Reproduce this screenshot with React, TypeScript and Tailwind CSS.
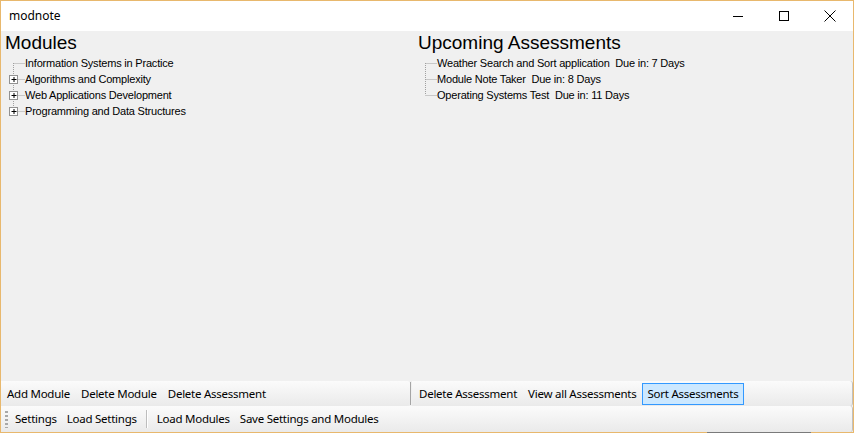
import React from "react";

const modules = [
  { name: "Information Systems in Practice", children: false },
  { name: "Algorithms and Complexity", children: true },
  { name: "Web Applications Development", children: true },
  { name: "Programming and Data Structures", children: true },
];

const assessments = [
  "Weather Search and Sort application  Due in: 7 Days",
  "Module Note Taker  Due in: 8 Days",
  "Operating Systems Test  Due in: 11 Days",
];

// tree connector for one row (16px high)
const TreeLines = ({
  x,
  width,
  first,
  last,
  plus,
}: {
  x: number;
  width: number;
  first: boolean;
  last: boolean;
  plus: boolean;
}) => (
  <svg width={width} height={16} className="shrink-0 block">
    <line
      x1={x}
      x2={x}
      y1={first ? 8 : 0}
      y2={last ? 8 : 16}
      stroke="#a0a0a0"
      strokeDasharray="1 1"
    />
    <line
      x1={plus ? x + 4 : x}
      x2={width}
      y1={8.5}
      y2={8.5}
      stroke="#a0a0a0"
      strokeDasharray="1 1"
    />
    {plus && (
      <g>
        <rect x={x - 4} y={4.5} width={8} height={8} fill="#fff" stroke="#919191" />
        <line x1={x - 2} x2={x + 3} y1={8.5} y2={8.5} stroke="#000" />
        <line x1={x + 0.5} x2={x + 0.5} y1={6} y2={11} stroke="#000" />
      </g>
    )}
  </svg>
);

const StripItem = ({ label, active }: { label: string; active?: boolean }) => (
  <div
    className={
      active
        ? "h-[22px] px-[4px] flex items-center border border-[#3399ff] bg-[#cce8ff]"
        : "h-[22px] px-[5px] flex items-center"
    }
  >
    {label}
  </div>
);

const App = () => {
  return (
    <div
      className="w-[854px] h-[433px] flex flex-col bg-[#f0f0f0] border-x border-t border-[#e8b86d] text-black overflow-hidden"
      style={{ fontFamily: "'Liberation Sans', Arial, sans-serif" }}
    >
      {/* Title bar */}
      <div className="h-[30px] bg-white flex items-center shrink-0">
        <div className="pl-2 text-[12px] font-['Noto_Sans',sans-serif] flex-1">
          modnote
        </div>
        <div className="flex h-full">
          <div className="w-[46px] h-full flex items-center justify-center">
            <div className="w-[10px] h-px bg-black" />
          </div>
          <div className="w-[46px] h-full flex items-center justify-center">
            <div className="w-[10px] h-[10px] border border-black" />
          </div>
          <div className="w-[46px] h-full flex items-center justify-center">
            <svg width="12" height="12" viewBox="0 0 12 12">
              <path d="M0.5 0.5 L11.5 11.5 M11.5 0.5 L0.5 11.5" stroke="#000" strokeWidth="1" />
            </svg>
          </div>
        </div>
      </div>

      {/* Main panels */}
      <div className="flex-1 flex">
        <div className="w-[412px] pl-1 pt-px">
          <h1 className="text-[19px] leading-[22px]">Modules</h1>
          <div className="pt-px text-[11px] leading-4 tracking-[-0.2px]">
            {modules.map((m, i) => (
              <div key={m.name} className="flex items-center h-4">
                <TreeLines
                  x={8.5}
                  width={20}
                  first={i === 0}
                  last={i === modules.length - 1}
                  plus={m.children}
                />
                <span className="whitespace-pre">{m.name}</span>
              </div>
            ))}
          </div>
        </div>
        <div className="flex-1 pl-[5px] pt-px">
          <h1 className="text-[19px] leading-[22px]">Upcoming Assessments</h1>
          <div className="pt-px text-[11px] leading-4 tracking-[-0.2px]">
            {assessments.map((a, i) => (
              <div key={a} className="flex items-center h-4">
                <TreeLines
                  x={7.5}
                  width={19}
                  first={i === 0}
                  last={i === assessments.length - 1}
                  plus={false}
                />
                <span className="whitespace-pre">{a}</span>
              </div>
            ))}
          </div>
        </div>
      </div>

      {/* Tool strips */}
      <div className="h-[25px] flex shrink-0 text-[11.5px] tracking-[-0.25px] font-['Noto_Sans',sans-serif]">
        <div className="w-[409px] flex items-center gap-px pl-[1px] rounded-r-[3px] bg-gradient-to-b from-[#fbfbfb] to-[#eaeaea]">
          <StripItem label="Add Module" />
          <StripItem label="Delete Module" />
          <StripItem label="Delete Assessment" />
        </div>
        <div className="w-px bg-[#a5a5a5] my-[1px]" />
        <div className="flex-1 flex items-center gap-px pl-[2px] ml-px rounded-r-[3px] border-r border-[#c0c0c0] bg-gradient-to-b from-[#fbfbfb] to-[#eaeaea]">
          <StripItem label="Delete Assessment" />
          <StripItem label="View all Assessments" />
          <StripItem label="Sort Assessments" active />
        </div>
      </div>
      <div className="h-[26px] flex items-center shrink-0 text-[11.5px] tracking-[-0.25px] font-['Noto_Sans',sans-serif] rounded-r-[3px] border-r border-[#c0c0c0] bg-gradient-to-b from-[#fbfbfb] to-[#eaeaea]">
        <div className="w-[3px] h-[17px] ml-[4px] mr-[2px] bg-[repeating-linear-gradient(to_bottom,#a8a8a8_0px,#a8a8a8_2px,transparent_2px,transparent_4px)]" />
        <StripItem label="Settings" />
        <StripItem label="Load Settings" />
        <div className="w-px h-[18px] bg-[#bdbdbd] border-r border-white mx-[4px] box-content" />
        <StripItem label="Load Modules" />
        <StripItem label="Save Settings and Modules" />
      </div>

      {/* bottom window edge */}
      <div className="h-px flex shrink-0">
        <div className="w-[706px] bg-[#e8b86d]" />
        <div className="w-[104px] bg-[#7a7a7a]" />
        <div className="flex-1 bg-[#e8b86d]" />
      </div>
    </div>
  );
};

export default App;
